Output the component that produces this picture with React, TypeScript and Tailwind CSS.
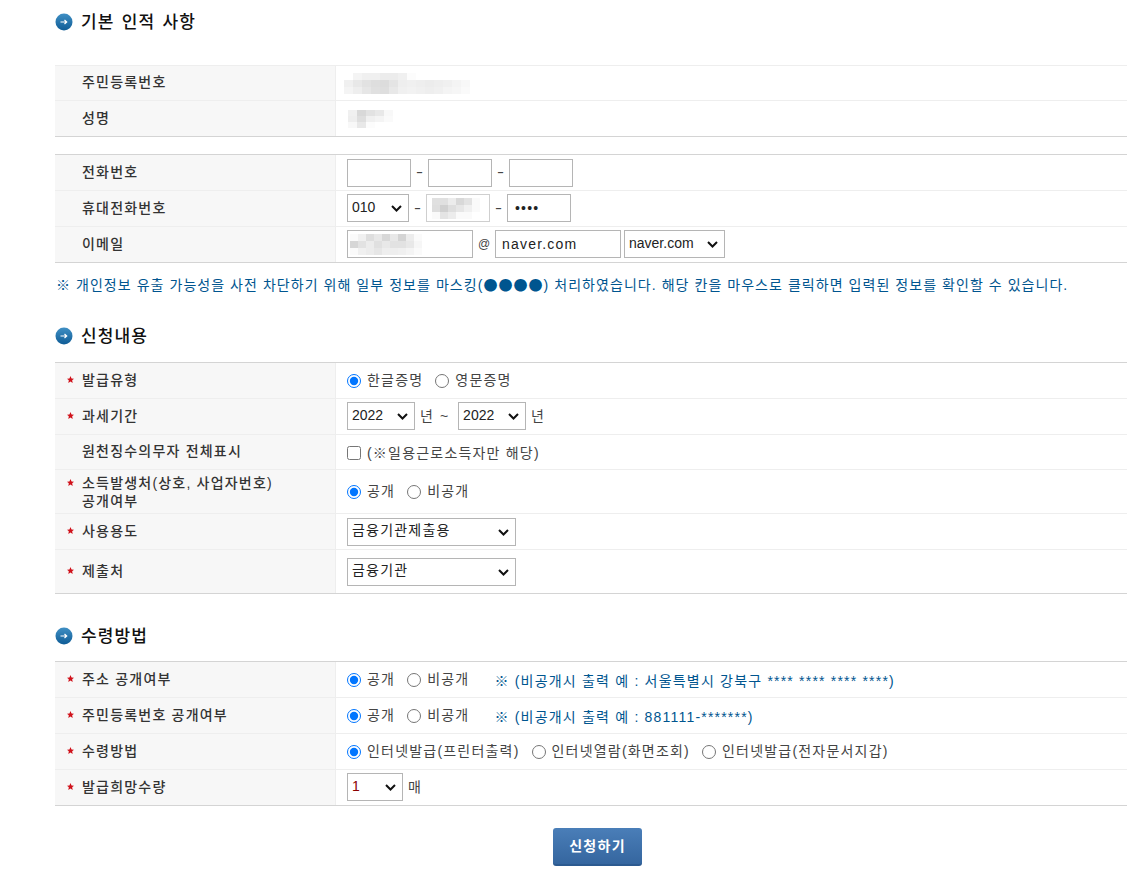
import type { ReactNode } from "react";

const fontStack = "font-['Liberation_Sans','Noto_Sans_CJK_KR',sans-serif]";

function SectionTitle({ title, className }: { title: string; className: string }) {
  return (
    <div className={`flex h-[44px] items-center pl-[55px] ${className}`}>
      <svg width="18" height="18" viewBox="0 0 18 18">
        <defs>
          <linearGradient id="ball" x1="0" y1="0" x2="0" y2="1">
            <stop offset="0" stopColor="#3f8fc4" />
            <stop offset="1" stopColor="#0f5c96" />
          </linearGradient>
        </defs>
        <circle cx="9" cy="9" r="8.5" fill="url(#ball)" />
        <path d="M5.5 9h6M9.5 7l2.2 2-2.2 2" fill="none" stroke="#fff" strokeWidth="1.2" />
      </svg>
      <h2 className="ml-[8px] pt-[2px] text-[17px] font-medium tracking-[1.1px] [word-spacing:1.5px] text-[#111]">
        {title}
      </h2>
    </div>
  );
}

function Row({
  label,
  star,
  height,
  last,
  twoLine,
  valueClass,
  children,
}: {
  label: ReactNode;
  star?: boolean;
  height: string;
  last?: boolean;
  twoLine?: boolean;
  valueClass?: string;
  children?: ReactNode;
}) {
  return (
    <div className={`flex ${height} border-b ${last ? "border-[#d4d4d4]" : "border-[#eeeeee]"}`}>
      <div
        className={`flex w-[281px] shrink-0 items-center border-r border-[#eeeeee] bg-[#f7f7f7] pl-[12px] text-[14px] leading-[18px] font-medium tracking-[1.2px] text-[#333] ${
          twoLine ? "" : "pb-[2px]"
        }`}
      >
        <span className={`flex w-[15px] shrink-0 ${twoLine ? "mt-[9px] self-start" : "self-center"}`}>
          {star && (
            <svg width="7" height="7" viewBox="0 0 10 10">
              <polygon points="5,0 6.5,3.4 10,3.8 7.4,6.2 8.1,10 5,8 1.9,10 2.6,6.2 0,3.8 3.5,3.4" fill="#d0121b" />
            </svg>
          )}
        </span>
        <span>{label}</span>
      </div>
      <div className={`flex min-w-0 flex-1 items-center pl-[11px] text-[14px] tracking-[1.2px] text-[#444] ${valueClass ?? ""}`}>
        {children}
      </div>
    </div>
  );
}

function Mosaic({ cells, size, className }: { cells: number[][]; size: string; className?: string }) {
  // blurred-out personal data in the original
  return (
    <div className={`flex flex-col ${className ?? ""}`}>
      {cells.map((line, y) => (
        <div key={y} className="flex">
          {line.map((v, x) => (
            <div key={x} className={size} style={{ backgroundColor: `rgb(${v},${v},${v})` }} />
          ))}
        </div>
      ))}
    </div>
  );
}

function Radio({ label, checked, className }: { label: string; checked?: boolean; className?: string }) {
  return (
    <label className={`flex items-center ${className ?? ""}`}>
      <input type="radio" defaultChecked={checked} className="m-0 h-[14px] w-[14px]" />
      <span className="ml-[6px]">{label}</span>
    </label>
  );
}

function Picker({ value, width, color }: { value: string; width: string; color?: string }) {
  return (
    <div className={`relative h-[28px] shrink-0 ${width}`}>
      <select
        defaultValue={value}
        className={`box-border h-full w-full appearance-none border border-[#b5b5b5] bg-white pb-[2px] pl-[4px] text-[14px] ${
          color ?? "text-[#222]"
        }`}
      >
        <option>{value}</option>
      </select>
      <svg
        width="11"
        height="7"
        viewBox="0 0 11 7"
        className="pointer-events-none absolute top-[11px] right-[7px]"
      >
        <path d="M1 1l4.5 4.5L10 1" fill="none" stroke="#111" strokeWidth="2" />
      </svg>
    </div>
  );
}

function Dash() {
  return <span className="inline-block w-[17px] scale-x-150 text-center tracking-normal">-</span>;
}

const field = "box-border h-[28px] border border-[#b5b5b5] bg-white text-[14px] text-[#222]";

export default function App() {
  return (
    <div className={`min-h-screen overflow-hidden bg-white ${fontStack}`}>
      <SectionTitle title="기본 인적 사항" className="mb-[21px]" />
      <div className="ml-[55px] border-t border-[#eeeeee]">
        <Row label="주민등록번호" height="h-[35px]">
          <Mosaic
            size="h-[7px] w-[9px]"
            className="-ml-[3px]"
            cells={[
              [255, 244, 240, 240, 236, 236, 240, 252, 255, 255, 255, 255, 255, 255],
              [240, 232, 226, 222, 220, 228, 238, 240, 238, 236, 238, 240, 244, 248],
              [244, 238, 230, 224, 222, 232, 240, 242, 240, 238, 240, 244, 246, 250],
            ]}
          />
        </Row>
        <Row label="성명" height="h-[36px]" last>
          <Mosaic
            size="h-[6px] w-[9px]"
            className="ml-[1px]"
            cells={[
              [240, 216, 226, 232, 248],
              [238, 222, 240, 244, 250],
              [248, 232, 252, 255, 255],
            ]}
          />
        </Row>
      </div>

      <div className="mt-[17px] ml-[55px] border-t border-[#d4d4d4]">
        <Row label="전화번호" height="h-[36px]">
          <input className={`${field} w-[64px]`} />
          <Dash />
          <input className={`${field} w-[64px]`} />
          <Dash />
          <input className={`${field} w-[64px]`} />
        </Row>
        <Row label="휴대전화번호" height="h-[36px]" valueClass="pb-[1px]">
          <Picker value="010" width="w-[62px] tracking-normal" />
          <Dash />
          <div className="box-border flex h-[28px] w-[64px] items-center border border-[#cfcfcf] pl-[5px]">
            <Mosaic
              size="h-[7px] w-[8px]"
              cells={[
                [224, 224, 236, 216, 226, 250],
                [222, 208, 222, 230, 240, 250],
                [250, 228, 236, 250, 250, 255],
              ]}
            />
          </div>
          <Dash />
          <input
            type="password"
            defaultValue="1234"
            className={`${field} w-[64px] pl-[7px] text-[12px]`}
          />
        </Row>
        <Row label="이메일" height="h-[36px]" last valueClass="pb-[1px]">
          <div className="box-border flex h-[28px] w-[126px] items-center border border-[#b5b5b5] pl-[2px]">
            <Mosaic
              size="h-[7px] w-[8px]"
              cells={[
                [250, 240, 222, 232, 216, 232, 212, 236, 250],
                [214, 226, 236, 224, 232, 226, 226, 232, 246],
                [250, 240, 236, 230, 238, 238, 240, 244, 250],
              ]}
            />
          </div>
          <span className="w-[22px] text-center text-[12px] tracking-normal">@</span>
          <input defaultValue="naver.com" className={`${field} w-[126px] pl-[6px] tracking-[1.2px]`} />
          <div className="ml-[3px] tracking-normal">
            <Picker value="naver.com" width="w-[101px]" />
          </div>
        </Row>
      </div>

      <p className="h-[42px] pt-[11px] pl-[56px] text-[14px] tracking-[1.05px] text-[#00558f]">
        ※ 개인정보 유출 가능성을 사전 차단하기 위해 일부 정보를 마스킹(
        <span className="font-['Noto_Sans_CJK_KR',sans-serif]">●●●●</span>) 처리하였습니다. 해당 칸을 마우스로 클릭하면 입력된 정보를 확인할 수 있습니다.
      </p>

      <SectionTitle title="신청내용" className="mt-[9px] mb-[4px]" />
      <div className="ml-[55px] border-t border-[#d4d4d4]">
        <Row label="발급유형" star height="h-[36px]">
          <Radio label="한글증명" checked />
          <Radio label="영문증명" className="ml-[12px]" />
        </Row>
        <Row label="과세기간" star height="h-[36px]" valueClass="pb-[1px]">
          <Picker value="2022" width="w-[68px] tracking-normal" />
          <span className="ml-[5px]">년</span>
          <span className="ml-[6px] w-[18px]">~</span>
          <Picker value="2022" width="w-[68px] tracking-normal" />
          <span className="ml-[5px]">년</span>
        </Row>
        <Row label="원천징수의무자 전체표시" height="h-[35px]">
          <input type="checkbox" className="m-0 h-[14px] w-[14px] translate-y-[1px]" />
          <span className="ml-[6px] translate-y-[1px]">(※일용근로소득자만 해당)</span>
        </Row>
        <Row
          label={
            <>
              소득발생처(상호, 사업자번호)
              <br />
              공개여부
            </>
          }
          star
          twoLine
          height="h-[44px]"
        >
          <Radio label="공개" checked />
          <Radio label="비공개" className="ml-[12px]" />
        </Row>
        <Row label="사용용도" star height="h-[36px]">
          <Picker value="금융기관제출용" width="w-[169px]" />
        </Row>
        <Row label="제출처" star height="h-[44px]" last>
          <Picker value="금융기관" width="w-[169px]" />
        </Row>
      </div>

      <SectionTitle title="수령방법" className="mt-[20px] mb-[3px]" />
      <div className="ml-[55px] border-t border-[#d4d4d4]">
        <Row label="주소 공개여부" star height="h-[36px]">
          <Radio label="공개" checked />
          <Radio label="비공개" className="ml-[12px]" />
          <span className="ml-[25px] translate-y-[2px] text-[#00558f]">
            ※ (비공개시 출력 예 : 서울특별시 강북구 **** **** **** ****)
          </span>
        </Row>
        <Row label="주민등록번호 공개여부" star height="h-[36px]">
          <Radio label="공개" checked />
          <Radio label="비공개" className="ml-[12px]" />
          <span className="ml-[25px] translate-y-[2px] text-[#00558f]">※ (비공개시 출력 예 : 881111-*******)</span>
        </Row>
        <Row label="수령방법" star height="h-[36px]">
          <Radio label="인터넷발급(프린터출력)" checked />
          <Radio label="인터넷열람(화면조회)" className="ml-[12px]" />
          <Radio label="인터넷발급(전자문서지갑)" className="ml-[12px]" />
        </Row>
        <Row label="발급희망수량" star height="h-[36px]" last valueClass="pb-[1px]">
          <Picker value="1" width="w-[56px]" color="text-[#8b0000]" />
          <span className="ml-[5px]">매</span>
        </Row>
      </div>

      <div className="mt-[22px] flex justify-center pl-[68px]">
        <button className="h-[38px] w-[89px] rounded-[3px] border-b-2 border-[#2c5a90] bg-gradient-to-b from-[#4a7eb8] to-[#35669f] text-[14px] font-bold tracking-[1.3px] text-white">
          신청하기
        </button>
      </div>
    </div>
  );
}
